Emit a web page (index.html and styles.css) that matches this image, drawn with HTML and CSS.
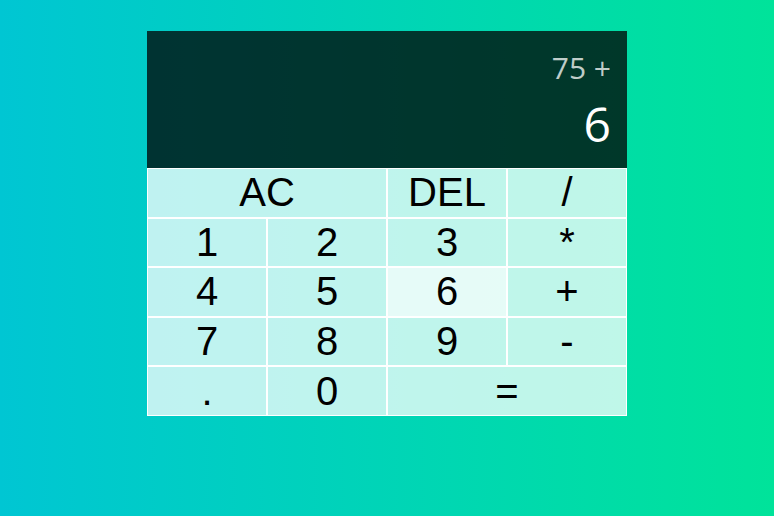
FILE: index.html
```
<!DOCTYPE html>
<html lang="en">
<head>
<meta charset="utf-8">
<title>Calculator</title>
<link rel="stylesheet" href="styles.css">
</head>
<body>
<div class="calculator-grid">
  <div class="output">
    <div class="previous-operand">75 +</div>
    <div class="current-operand">6</div>
  </div>
  <button class="span-two">AC</button>
  <button>DEL</button>
  <button>/</button>
  <button>1</button>
  <button>2</button>
  <button>3</button>
  <button>*</button>
  <button>4</button>
  <button>5</button>
  <button class="hover">6</button>
  <button>+</button>
  <button>7</button>
  <button>8</button>
  <button>9</button>
  <button>-</button>
  <button>.</button>
  <button>0</button>
  <button class="span-two">=</button>
</div>
</body>
</html>
```
FILE: styles.css
```
*, *::before, *::after {
  box-sizing: border-box;
}

html, body {
  margin: 0;
  padding: 0;
  width: 774px;
  height: 516px;
  overflow: hidden;
}

body {
  background: linear-gradient(to right, #00c6d3, #00e39a);
  font-family: "Open Sans", "Noto Sans", sans-serif;
}

.calculator-grid {
  display: grid;
  justify-content: center;
  grid-template-columns: repeat(4, 120px);
  grid-template-rows: 137px repeat(5, 49.6px);
  padding-top: 31px;
}

.calculator-grid > button {
  font-family: "Liberation Sans", Arial, sans-serif;
  font-size: 40px;
  color: #000;
  border: 1px solid #fff;
  outline: none;
  padding: 0;
  background-color: rgba(255, 255, 255, 0.75);
  cursor: pointer;
}

.calculator-grid > button.hover {
  background-color: rgba(255, 255, 255, 0.9);
}

.span-two {
  grid-column: span 2;
}

.output {
  grid-column: 1 / -1;
  background-color: rgba(0, 0, 0, 0.75);
  display: flex;
  flex-direction: column;
  align-items: flex-end;
  justify-content: space-around;
  padding: 10px 16px 10px 15px;
}

.previous-operand {
  color: rgba(255, 255, 255, 0.75);
  font-size: 30px;
  padding-top: 4px;
}

.current-operand {
  color: #fff;
  font-size: 48px;
}
```
